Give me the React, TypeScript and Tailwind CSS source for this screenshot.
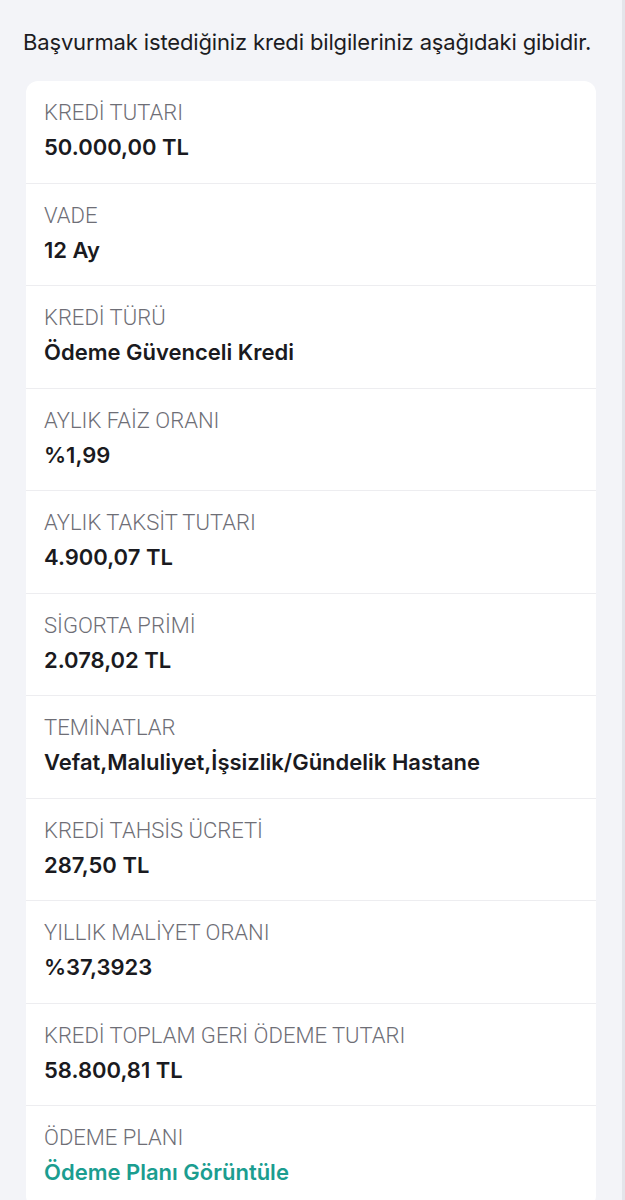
const rows: { label: string; value: string; link?: boolean }[] = [
  { label: "KREDİ TUTARI", value: "50.000,00 TL" },
  { label: "VADE", value: "12 Ay" },
  { label: "KREDİ TÜRÜ", value: "Ödeme Güvenceli Kredi" },
  { label: "AYLIK FAİZ ORANI", value: "%1,99" },
  { label: "AYLIK TAKSİT TUTARI", value: "4.900,07 TL" },
  { label: "SİGORTA PRİMİ", value: "2.078,02 TL" },
  { label: "TEMİNATLAR", value: "Vefat,Maluliyet,İşsizlik/Gündelik Hastane" },
  { label: "KREDİ TAHSİS ÜCRETİ", value: "287,50 TL" },
  { label: "YILLIK MALİYET ORANI", value: "%37,3923" },
  { label: "KREDİ TOPLAM GERİ ÖDEME TUTARI", value: "58.800,81 TL" },
  { label: "ÖDEME PLANI", value: "Ödeme Planı Görüntüle", link: true },
];

export default function App() {
  return (
    <div
      className="min-h-[1200px] bg-[#f3f4f8] border-r-[3px] border-[#e4e5ea]"
      style={{ fontFamily: "Inter, 'Noto Sans', sans-serif" }}
    >
      <p className="pl-[23px] pt-[28px] text-[22px] leading-[28px] text-[#1c1c22] tracking-[-0.15px]">
        Başvurmak istediğiniz kredi bilgileriniz aşağıdaki gibidir.
      </p>

      {/* Card */}
      <div className="mx-[26px] mt-[25px] rounded-[12px] bg-white">
        {rows.map((r, i) => (
          <div
            key={r.label}
            className={
              "flex flex-col gap-[8px] pl-[18px] pt-[19px] pb-[22.5px] " +
              (i < rows.length - 1 ? "border-b border-[#ededf0]" : "")
            }
          >
            <span
              className="text-[22px] leading-[26px] font-light text-[#6e6e76]"
              style={{ fontFamily: "Roboto, 'Noto Sans', sans-serif" }}
            >
              {r.label}
            </span>
            <span
              className={
                "text-[22px] leading-[26px] font-semibold " +
                (r.link ? "text-[#1b9d90]" : "text-[#1a1a20]")
              }
            >
              {r.value}
            </span>
          </div>
        ))}
      </div>
    </div>
  );
}
